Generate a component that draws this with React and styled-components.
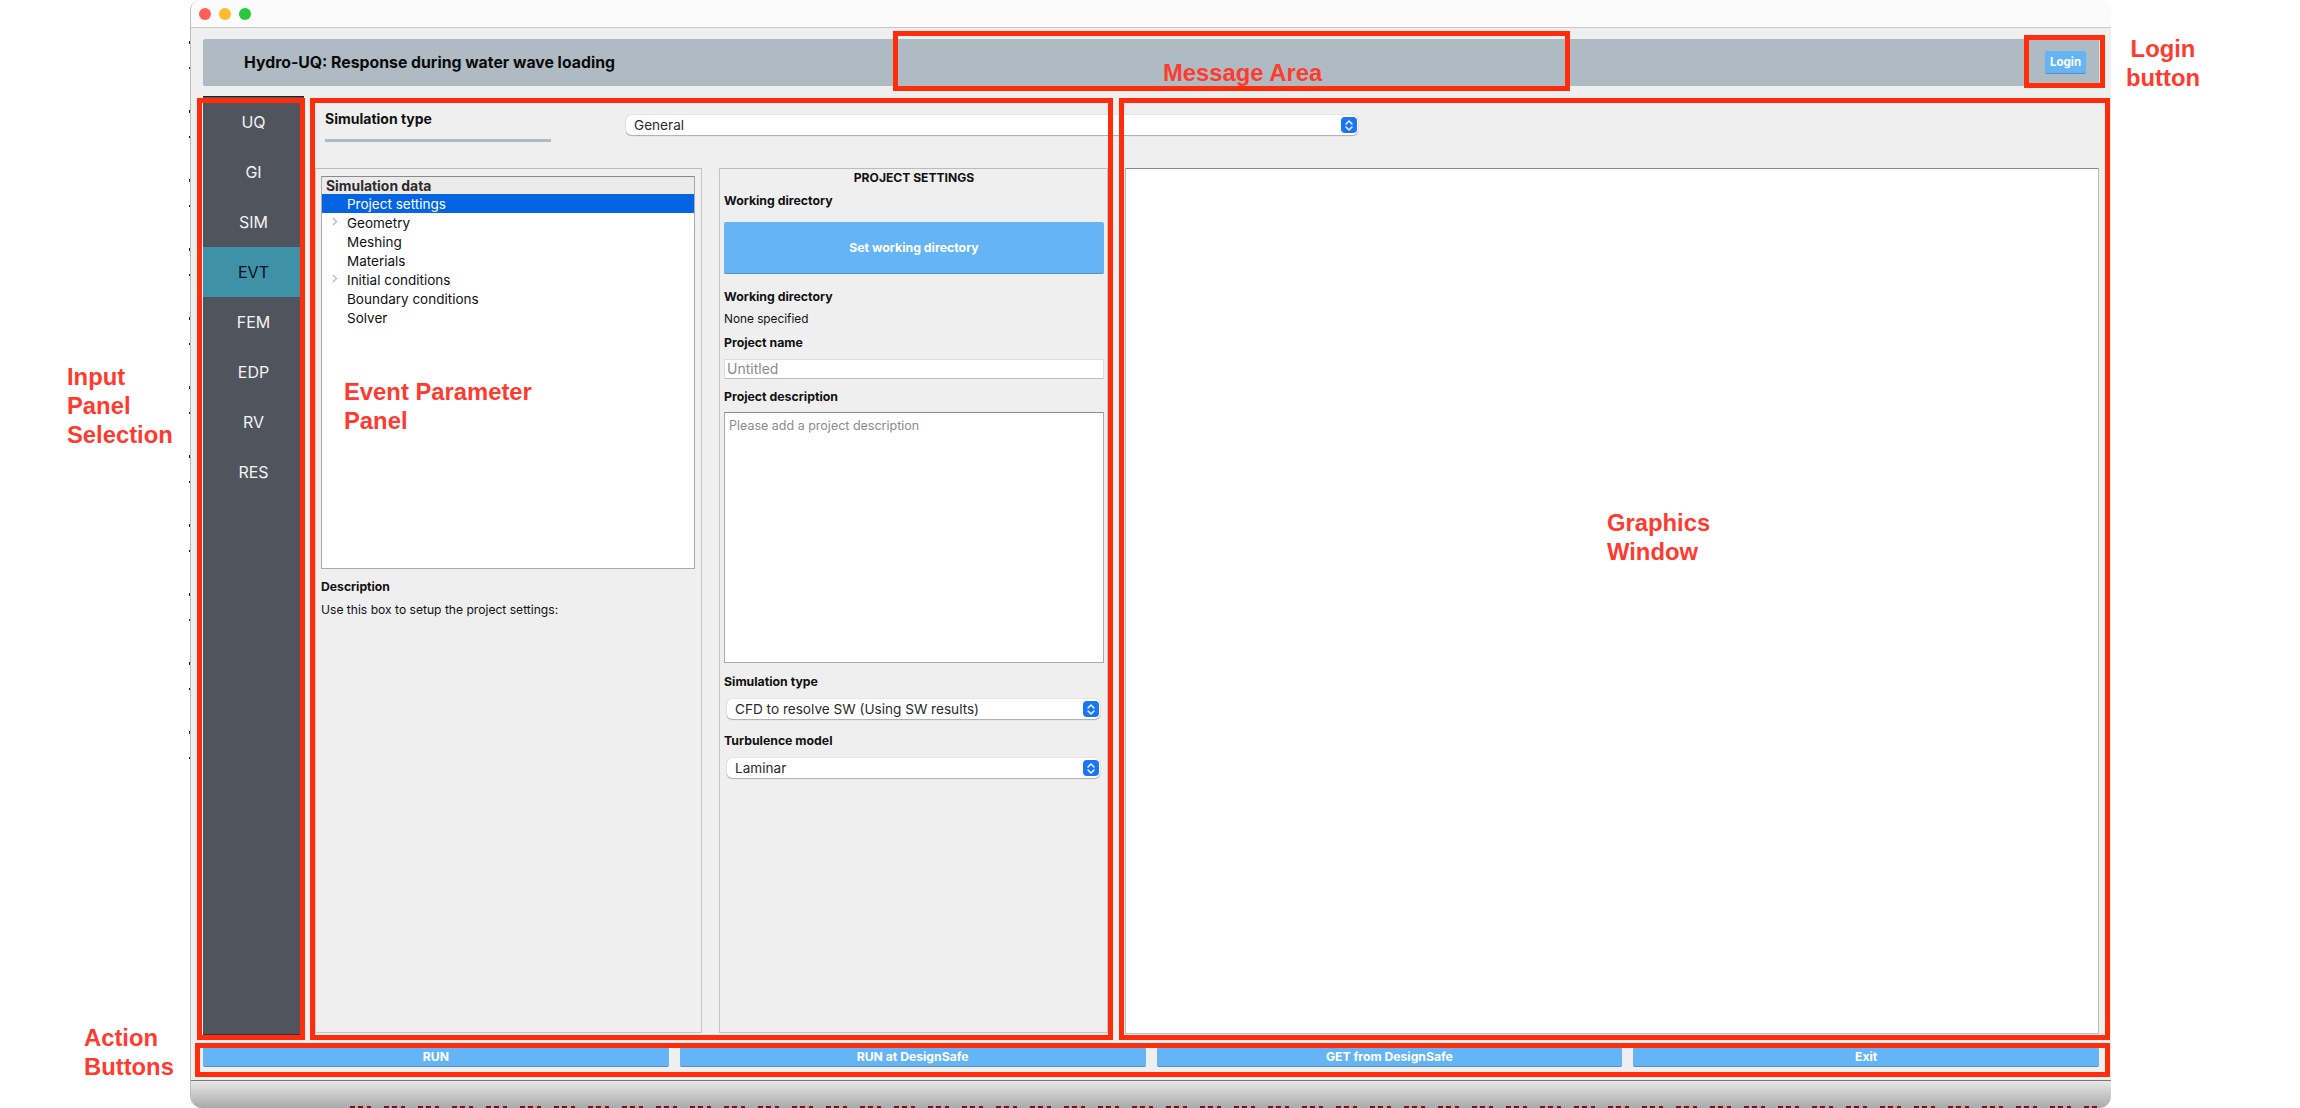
import React from 'react';
import styled, { createGlobalStyle } from 'styled-components';

const NAV_ITEMS = ['UQ', 'GI', 'SIM', 'EVT', 'FEM', 'EDP', 'RV', 'RES'];
const TREE_ITEMS = [
  { label: 'Project settings', selected: true },
  { label: 'Geometry', expandable: true },
  { label: 'Meshing' },
  { label: 'Materials' },
  { label: 'Initial conditions', expandable: true },
  { label: 'Boundary conditions' },
  { label: 'Solver' },
];
const ACTIONS = ['RUN', 'RUN at DesignSafe', 'GET from DesignSafe', 'Exit'];
const FRAMES = [
  { id: 'message', x: 893, y: 31, w: 677, h: 60 },
  { id: 'login', x: 2024, y: 35, w: 81, h: 53 },
  { id: 'nav', x: 197, y: 98, w: 108, h: 942 },
  { id: 'event', x: 310, y: 98, w: 803, h: 942 },
  { id: 'graphics', x: 1119, y: 98, w: 991, h: 942 },
  { id: 'actions', x: 195, y: 1043, w: 1915, h: 34 },
];
const CALLOUTS = [
  { lines: ['Input', 'Panel', 'Selection'], x: 67, y: 362 },
  { lines: ['Event Parameter', 'Panel'], x: 344, y: 377 },
  { lines: ['Message Area'], x: 1163, y: 58 },
  { lines: ['Graphics', 'Window'], x: 1607, y: 508 },
  { lines: ['Login', 'button'], x: 2126, y: 34, center: true },
  { lines: ['Action', 'Buttons'], x: 84, y: 1023 },
];

function Chevrons() {
  return (
    <svg width="8" height="11" viewBox="0 0 8 11" fill="none" stroke="#fff" strokeWidth="1.4" strokeLinecap="round" strokeLinejoin="round">
      <path d="M1 4 4 1 7 4" />
      <path d="M1 7 4 10 7 7" />
    </svg>
  );
}

function Dropdown({ value, wide }) {
  return (
    <SelectBox $wide={wide}>
      <span>{value}</span>
      <SelectKnob>
        <Chevrons />
      </SelectKnob>
    </SelectBox>
  );
}

function App() {
  return (
    <>
      <GlobalStyle />
      <Page>
        <Window>
          <TitleBar>
            <Light $color="#ff5f57" />
            <Light $color="#febc2e" />
            <Light $color="#28c840" />
          </TitleBar>
          <Header>
            <AppTitle>Hydro-UQ: Response during water wave loading</AppTitle>
            <LoginButton>Login</LoginButton>
          </Header>
          <Main>
            <Nav>
              {NAV_ITEMS.map((item) => (
                <NavItem key={item} $active={item === 'EVT'}>
                  {item}
                </NavItem>
              ))}
            </Nav>
            <Content>
              <TopStrip>
                <TypeHeading>
                  <strong>Simulation type</strong>
                  <TypeRule />
                </TypeHeading>
                <Dropdown value="General" wide />
              </TopStrip>
              <Panels>
                <TreePanel>
                  <Tree>
                    <TreeHeader>Simulation data</TreeHeader>
                    {TREE_ITEMS.map((item) => (
                      <TreeRow key={item.label} $selected={item.selected}>
                        {item.expandable && (
                          <TreeArrow width="6" height="9" viewBox="0 0 6 9" fill="none" stroke="#b5b5b5" strokeWidth="1.2">
                            <path d="M1 1l3.5 3.5L1 8" />
                          </TreeArrow>
                        )}
                        {item.label}
                      </TreeRow>
                    ))}
                  </Tree>
                  <DescriptionTitle>Description</DescriptionTitle>
                  <DescriptionText>Use this box to setup the project settings:</DescriptionText>
                </TreePanel>
                <SettingsPanel>
                  <SettingsTitle>PROJECT SETTINGS</SettingsTitle>
                  <FieldLabel $top={8}>Working directory</FieldLabel>
                  <BigButton>Set working directory</BigButton>
                  <FieldLabel $top={15}>Working directory</FieldLabel>
                  <PlainValue>None specified</PlainValue>
                  <FieldLabel $top={8}>Project name</FieldLabel>
                  <NameInput placeholder="Untitled" readOnly />
                  <FieldLabel $top={10}>Project description</FieldLabel>
                  <DescriptionInput placeholder="Please add a project description" readOnly />
                  <FieldLabel $top={11}>Simulation type</FieldLabel>
                  <Dropdown value="CFD to resolve SW (Using SW results)" />
                  <FieldLabel $top={14}>Turbulence model</FieldLabel>
                  <Dropdown value="Laminar" />
                </SettingsPanel>
                <Graphics />
              </Panels>
            </Content>
          </Main>
          <Actions>
            {ACTIONS.map((action) => (
              <ActionButton key={action}>{action}</ActionButton>
            ))}
          </Actions>
          <BottomBar />
        </Window>
        <BehindLeft />
        <BehindBottom />
        {FRAMES.map((frame) => (
          <Frame key={frame.id} $x={frame.x} $y={frame.y} $w={frame.w} $h={frame.h} />
        ))}
        {CALLOUTS.map((callout) => (
          <Callout key={callout.lines[0]} $x={callout.x} $y={callout.y} $center={callout.center}>
            {callout.lines.map((line) => (
              <div key={line}>{line}</div>
            ))}
          </Callout>
        ))}
      </Page>
    </>
  );
}

export default App;

const GlobalStyle = createGlobalStyle`
  html, body {
    margin: 0;
    background: #fff;
    overflow: hidden;
  }

  * {
    box-sizing: border-box;
  }
`;

const Page = styled.div`
  position: relative;
  width: 2300px;
  height: 1108px;
  overflow: hidden;
  font-family: Inter, 'Liberation Sans', sans-serif;
  color: #111;
`;

const Window = styled.div`
  display: flex;
  flex-direction: column;
  width: 1921px;
  height: 1108px;
  margin-left: 190px;
  background: #efefef;
  border-left: 1px solid #bdbdbd;
  border-radius: 10px 10px 12px 12px;
  overflow: hidden;
`;

const TitleBar = styled.div`
  display: flex;
  align-items: center;
  gap: 8px;
  height: 28px;
  padding-left: 8px;
  background: #fbfbfb;
  border-bottom: 1px solid #c9c9c9;
`;

const Light = styled.span`
  width: 12px;
  height: 12px;
  border-radius: 50%;
  background: ${(p) => p.$color};
`;

const Header = styled.div`
  display: flex;
  align-items: center;
  justify-content: space-between;
  height: 47px;
  margin: 11px 12px 0 12px;
  padding: 0 13px 0 41px;
  background: #aebbc3;
  border-radius: 2px;
`;

const AppTitle = styled.div`
  font-size: 15.8px;
  font-weight: 700;
  color: #0b0b0b;
`;

const LoginButton = styled.div`
  display: flex;
  align-items: center;
  justify-content: center;
  width: 41px;
  height: 23px;
  background: #64b4f6;
  border-bottom: 1px solid #5d8fb5;
  border-radius: 2px;
  color: #fff;
  font-size: 11.5px;
  font-weight: 700;
`;

const Main = styled.div`
  display: flex;
  flex: none;
  height: 938px;
  margin: 11px 12px 0 12px;
`;

const Nav = styled.div`
  flex: none;
  width: 101px;
  background: #50545c;
  box-shadow: 0 -1px 0 #222;
  border-bottom: 1px solid #333;
`;

const NavItem = styled.div`
  display: flex;
  align-items: center;
  justify-content: center;
  height: 50px;
  font-size: 16px;
  color: ${(p) => (p.$active ? '#06141a' : '#f3f3f3')};
  background: ${(p) => (p.$active ? '#3f91a8' : 'transparent')};
`;

const Content = styled.div`
  display: flex;
  flex: 1;
  flex-direction: column;
  margin-left: 11px;
  min-width: 0;
`;

const TopStrip = styled.div`
  display: flex;
  flex: none;
  align-items: flex-start;
  height: 71px;
  padding-top: 18px;
`;

const TypeHeading = styled.div`
  flex: none;
  width: 311px;
  margin-top: -4px;
  padding-left: 10px;

  strong {
    display: block;
    font-size: 14px;
    line-height: 16px;
  }
`;

const TypeRule = styled.div`
  width: 226px;
  height: 3px;
  margin-top: 12px;
  background: #aebbc3;
`;

const Panels = styled.div`
  display: flex;
  flex: 1;
  gap: 17px;
  min-height: 0;
  padding-bottom: 1px;
`;

const TreePanel = styled.div`
  flex: none;
  width: 387px;
  margin-bottom: 1px;
  padding: 7px 6px 0 5px;
  border: 1px solid #c4c4c4;
  border-top-color: #bbb;
`;

const Tree = styled.div`
  height: 393px;
  background: #fff;
  border: 1px solid #aaa;
  border-top-color: #8a8a8a;
`;

const TreeHeader = styled.div`
  height: 17px;
  padding-left: 4px;
  background: #ebebeb;
  font-size: 13.9px;
  line-height: 18px;
  font-weight: 700;
  color: #2c2c2c;
`;

const TreeRow = styled.div`
  position: relative;
  height: 19px;
  padding-left: 25px;
  font-size: 13.5px;
  line-height: 20px;
  color: ${(p) => (p.$selected ? '#fff' : '#111')};
  background: ${(p) => (p.$selected ? '#0464e4' : 'transparent')};
`;

const TreeArrow = styled.svg`
  position: absolute;
  left: 10px;
  top: 4px;
`;

const DescriptionTitle = styled.div`
  margin-top: 10px;
  font-size: 12.2px;
  line-height: 15px;
  font-weight: 700;
`;

const DescriptionText = styled.div`
  margin-top: 8px;
  font-size: 12.1px;
  line-height: 15px;
`;

const SettingsPanel = styled.div`
  display: flex;
  flex: none;
  flex-direction: column;
  width: 389px;
  margin-bottom: 1px;
  padding: 1px 3px 0 4px;
  border: 1px solid #c4c4c4;
  border-top-color: #bbb;
`;

const SettingsTitle = styled.div`
  font-size: 12.1px;
  line-height: 15px;
  font-weight: 700;
  text-align: center;
`;

const FieldLabel = styled.div`
  margin-top: ${(p) => p.$top}px;
  font-size: 12.3px;
  line-height: 15px;
  font-weight: 700;
`;

const BigButton = styled.div`
  display: flex;
  flex: none;
  align-items: center;
  justify-content: center;
  height: 52px;
  margin-top: 14px;
  background: #64b4f6;
  border-bottom: 1px solid #5d8fb5;
  border-radius: 2px;
  color: #fff;
  font-size: 12.3px;
  font-weight: 700;
`;

const PlainValue = styled.div`
  margin-top: 8px;
  font-size: 11.8px;
  line-height: 15px;
`;

const NameInput = styled.input`
  flex: none;
  width: 100%;
  height: 20px;
  margin-top: 9px;
  padding: 0 2px 2px;
  background: #fff;
  border: 1px solid #dcdcdc;
  border-bottom-color: #bcbcbc;
  outline: none;
  font-family: inherit;
  font-size: 14px;

  &::placeholder {
    color: #8c8c8c;
  }
`;

const DescriptionInput = styled.textarea`
  flex: none;
  display: block;
  width: 100%;
  height: 251px;
  margin-top: 8px;
  padding: 5px 4px;
  background: #fff;
  border: 1px solid #aaa;
  border-top-color: #8a8a8a;
  outline: none;
  resize: none;
  font-family: inherit;
  font-size: 12.5px;

  &::placeholder {
    color: #8c8c8c;
  }
`;

const SelectBox = styled.div`
  display: flex;
  flex: none;
  align-items: center;
  justify-content: space-between;
  width: ${(p) => (p.$wide ? '732px' : 'auto')};
  height: 20px;
  margin: ${(p) => (p.$wide ? '0' : '10px 4px 0 3px')};
  padding: 0 1px 0 8px;
  background: #fff;
  border-radius: 5px;
  box-shadow: 0 0 1px rgba(0, 0, 0, 0.35), 0 1px 1px rgba(0, 0, 0, 0.25);
  font-size: 13.6px;
  color: #2a2a2a;
`;

const SelectKnob = styled.div`
  display: flex;
  align-items: center;
  justify-content: center;
  width: 16px;
  height: 16px;
  background: #1a76f2;
  border-radius: 4px;
`;

const Graphics = styled.div`
  flex: 1;
  background: #fff;
  border: 1px solid #bbb;
  border-top-color: #8a8a8a;
`;

const Actions = styled.div`
  display: flex;
  flex: none;
  gap: 11px;
  height: 20px;
  margin: 12px 12px 0 12px;
`;

const ActionButton = styled.div`
  display: flex;
  flex: 1;
  align-items: center;
  justify-content: center;
  background: #64b4f6;
  border-bottom: 1px solid #5d8fb5;
  border-radius: 2px;
  color: #fff;
  font-size: 12.2px;
  font-weight: 700;
`;

const BottomBar = styled.div`
  flex: none;
  height: 28px;
  margin-top: 13px;
  background: linear-gradient(#e8e8e8, #a9a9a9);
  border-top: 1px solid #777;
`;

/* bits of the desktop behind the window that show along its edges */
const BehindLeft = styled.div`
  position: absolute;
  left: 189px;
  top: 0;
  width: 1px;
  height: 780px;
  background: repeating-linear-gradient(transparent 0 41px, #222 41px 44px, transparent 44px 67px, #222 67px 69px);
`;

const BehindBottom = styled.div`
  position: absolute;
  left: 350px;
  top: 1106px;
  width: 1750px;
  height: 2px;
  background: repeating-linear-gradient(
    90deg,
    #7a1224 0 5px,
    transparent 5px 8px,
    #7a1224 8px 13px,
    transparent 13px 17px,
    #7a1224 17px 21px,
    transparent 21px 34px
  );
`;

const Frame = styled.div`
  position: absolute;
  left: ${(p) => p.$x}px;
  top: ${(p) => p.$y}px;
  width: ${(p) => p.$w}px;
  height: ${(p) => p.$h}px;
  border: 5px solid #ff2d0c;
  pointer-events: none;
`;

const Callout = styled.div`
  position: absolute;
  left: ${(p) => p.$x}px;
  top: ${(p) => p.$y}px;
  font-family: 'Liberation Sans', sans-serif;
  font-size: 23.8px;
  line-height: 29px;
  font-weight: 700;
  color: #ff3b30;
  text-align: ${(p) => (p.$center ? 'center' : 'left')};
`;
